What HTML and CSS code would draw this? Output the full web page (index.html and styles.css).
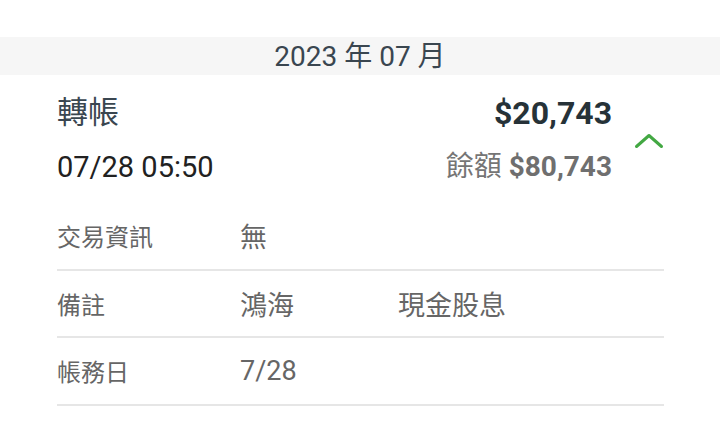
FILE: index.html
```html
<!DOCTYPE html>
<html lang="zh-Hant">
<head>
<meta charset="utf-8">
<link rel="stylesheet" href="styles.css">
</head>
<body>
<div class="page">
  <div class="month">2023 年 07 月</div>
  <div class="card">
    <div class="summary">
      <div class="left">
        <div class="title">轉帳</div>
        <div class="date">07/28 05:50</div>
      </div>
      <div class="right">
        <div class="amount">$20,743</div>
        <div class="balance">餘額 <b>$80,743</b></div>
      </div>
      <div class="toggle">
        <svg width="30" height="16" viewBox="0 0 30 16"><path d="M2.5 13.5 L15 2.5 L27.5 13.5" fill="none" stroke="#43a843" stroke-width="3" stroke-linecap="round" stroke-linejoin="round"/></svg>
      </div>
    </div>
    <div class="details">
      <div class="row"><div class="label">交易資訊</div><div class="value">無</div></div>
      <div class="row"><div class="label">備註</div><div class="value"><span class="v1">鴻海</span><span>現金股息</span></div></div>
      <div class="row"><div class="label">帳務日</div><div class="value">7/28</div></div>
    </div>
  </div>
</div>
</body>
</html>
```

FILE: styles.css
```css
* { box-sizing: border-box; }
html, body { margin: 0; padding: 0; background: #fff; }
body {
  font-family: Roboto, "Noto Sans CJK TC", sans-serif;
  width: 720px;
  height: 431px;
  overflow: hidden;
}
.page { padding-top: 37px; }
.month {
  height: 38px;
  background: #f6f6f6;
  color: #3a4650;
  font-size: 28px;
  line-height: 40px;
  text-align: center;
}
.card { padding: 0 56px 0 57px; }
.summary {
  display: flex;
  align-items: flex-start;
  padding-top: 16px;
}
.left { flex: 1; }
.title {
  font-size: 31px;
  line-height: 44px;
  color: #3a4650;
}
.date {
  font-size: 29px;
  line-height: 36px;
  color: #212121;
  margin-top: 14px;
}
.right { text-align: right; }
.amount {
  font-size: 32px;
  font-weight: 700;
  line-height: 44px;
  color: #263238;
}
.balance {
  font-size: 28px;
  line-height: 36px;
  color: #757575;
  margin-top: 14px;
}
.balance b { font-weight: 700; color: #6f6f6f; }
.toggle {
  width: 52px;
  display: flex;
  justify-content: flex-end;
  padding-top: 42px;
}
.details { margin-top: 18px; }
.row {
  display: flex;
  align-items: center;
  height: 67.5px;
  border-bottom: 2px solid #e6e6e6;
  color: #666;
  font-size: 24px;
}
.label { width: 183px; }
.value { display: flex; font-size: 27px; }
.v1 { width: 158px; }
```
